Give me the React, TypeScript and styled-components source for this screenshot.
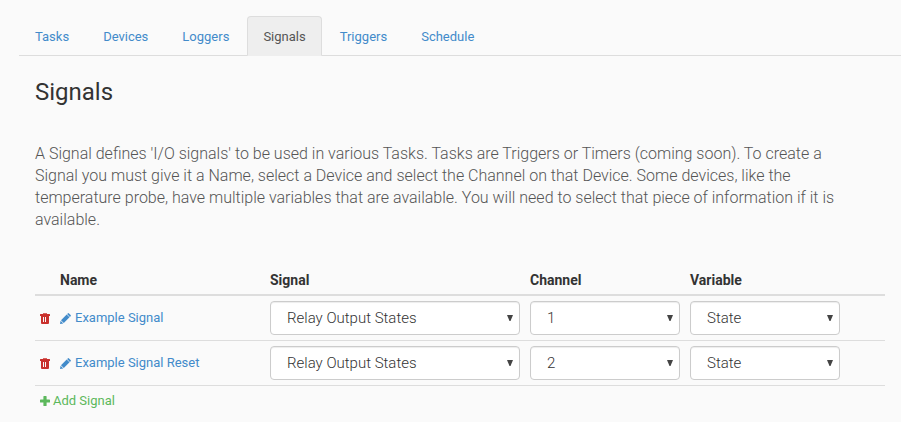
import React from "react";
import styled, { createGlobalStyle } from "styled-components";

const GlobalStyle = createGlobalStyle`
  * { box-sizing: border-box; }
  body {
    margin: 0;
    background: #fafafa;
    color: #333;
    font-family: Roboto, "Liberation Sans", sans-serif;
    font-size: 13px;
    line-height: 18px;
  }
`;

const Page = styled.main`
  padding: 16px 0 0 19px;
`;

const Tabs = styled.nav`
  display: flex;
  border-bottom: 1px solid #ddd;
`;

const Tab = styled.a<{ $active?: boolean }>`
  margin: 0 2px -1px 0;
  padding: 11px 15px 9px;
  border: 1px solid ${(p) => (p.$active ? "#ddd" : "transparent")};
  border-bottom: ${(p) => (p.$active ? "1px solid #eee" : "1px solid transparent")};
  border-radius: 4px 4px 0 0;
  background: ${(p) => (p.$active ? "#eee" : "transparent")};
  color: ${(p) => (p.$active ? "#555" : "#428bca")};
  text-decoration: none;
`;

const Content = styled.section`
  padding: 20px 16px 0;
`;

const Title = styled.h1`
  margin: 0;
  font-size: 24px;
  font-weight: 400;
  line-height: 32px;
`;

const Intro = styled.p`
  max-width: 800px;
  margin: 35px 0 0;
  color: #555;
  font-size: 16px;
  font-weight: 300;
  line-height: 22px;
`;

const Table = styled.table`
  width: 100%;
  margin-top: 35px;
  border-collapse: separate;
  border-spacing: 0;
  table-layout: fixed;
`;

const Col = styled.col<{ $width?: number }>`
  width: ${(p) => (p.$width ? `${p.$width}px` : "auto")};
`;

const HeadCell = styled.th`
  padding: 5px;
  border-bottom: 2px solid #ddd;
  text-align: left;
  font-size: 14px;
  font-weight: 700;
`;

const Cell = styled.td`
  padding: 5px;
  border-bottom: 1px solid #ddd;
`;

const FootCell = styled.td`
  padding: 6px 5px;
`;

const IconButton = styled.button<{ $tone: string }>`
  display: flex;
  align-items: center;
  gap: 3px;
  padding: 0;
  border: 0;
  background: none;
  color: ${(p) => p.$tone};
  font: inherit;
  cursor: pointer;
`;

const NameLink = styled.a`
  display: flex;
  align-items: center;
  gap: 4px;
  color: #428bca;
  text-decoration: none;
`;

const SelectBox = styled.div`
  position: relative;
`;

const Select = styled.select`
  display: block;
  width: 100%;
  height: 34px;
  padding: 0 24px 0 16px;
  appearance: none;
  border: 1px solid #ccc;
  border-radius: 4px;
  background: #fff;
  box-shadow: inset 0 1px 1px rgba(0, 0, 0, 0.075);
  color: #333;
  font: inherit;
  font-size: 15px;
  font-weight: 300;
`;

const Arrow = styled.svg`
  position: absolute;
  top: 14px;
  right: 7px;
  pointer-events: none;
`;

const Icon = styled.svg`
  flex: none;
  fill: currentColor;
`;

const TrashIcon = () => (
  <Icon width="10" height="11" viewBox="0 0 10 11" aria-hidden="true">
    <path
      fillRule="evenodd"
      d="M3 1Q3 0 4 0h2Q7 0 7 1H9.5Q10 1 10 1.500V3H0V1.500Q0 1 .5 1ZM4 .8V1h2V.8ZM1 3h8v7q0 1-1 1H2q-1 0-1-1ZM3 4v5h1V4Zm2 0v5h1V4Z"
    />
  </Icon>
);

const PencilIcon = () => (
  <Icon width="11" height="11" viewBox="0 0 11 11" aria-hidden="true">
    <path d="M7.800.4q.6-.6 1.200 0l1.600 1.600q.6.600 0 1.200l-.7.700L7.100 1.100ZM6.700 1.500l2.800 2.800-5.700 5.700L1 7.200ZM.6 7.700l2.700 2.700L0 11Z" />
  </Icon>
);

const PlusIcon = () => (
  <Icon width="10" height="10" viewBox="0 0 10 10" aria-hidden="true">
    <path d="M4 0h2q.6 0 .6.6v2.800h2.800q.6 0 .6.6v2q0 .6-.6.6H6.600v2.800q0 .6-.6.6H4q-.6 0-.6-.6V6.600H.6Q0 6.600 0 6V4q0-.6.6-.6h2.800V.6Q3.400 0 4 0Z" />
  </Icon>
);

function Dropdown({ label, value, options }: { label: string; value: string; options: string[] }) {
  return (
    <SelectBox>
      <Select aria-label={label} defaultValue={value}>
        {options.map((o) => (
          <option key={o}>{o}</option>
        ))}
      </Select>
      <Arrow width="6" height="6" viewBox="0 0 6 6" aria-hidden="true">
        <path d="M0 0h6L3.500 6h-1Z" fill="#444" />
      </Arrow>
    </SelectBox>
  );
}

const tabs = ["Tasks", "Devices", "Loggers", "Signals", "Triggers", "Schedule"];

const signals = [
  { name: "Example Signal", signal: "Relay Output States", channel: "1", variable: "State" },
  { name: "Example Signal Reset", signal: "Relay Output States", channel: "2", variable: "State" },
];

export default function App() {
  return (
    <Page>
      <GlobalStyle />
      <Tabs>
        {tabs.map((t) => (
          <Tab key={t} href={`#${t.toLowerCase()}`} $active={t === "Signals"}>
            {t}
          </Tab>
        ))}
      </Tabs>
      <Content>
        <Title>Signals</Title>
        <Intro>
          A Signal defines 'I/O signals' to be used in various Tasks. Tasks are Triggers or Timers
          (coming soon). To create a Signal you must give it a Name, select a Device and select the
          Channel on that Device. Some devices, like the temperature probe, have multiple variables
          that are available. You will need to select that piece of information if it is available.
        </Intro>
        <Table>
          <colgroup>
            <Col $width={20} />
            <Col $width={210} />
            <Col $width={260} />
            <Col $width={160} />
            <Col $width={160} />
            <Col />
          </colgroup>
          <thead>
            <tr>
              <HeadCell />
              <HeadCell scope="col">Name</HeadCell>
              <HeadCell scope="col">Signal</HeadCell>
              <HeadCell scope="col">Channel</HeadCell>
              <HeadCell scope="col">Variable</HeadCell>
              <HeadCell />
            </tr>
          </thead>
          <tbody>
            {signals.map((s) => (
              <tr key={s.name}>
                <Cell>
                  <IconButton type="button" $tone="#c9302c" aria-label={`Delete ${s.name}`}>
                    <TrashIcon />
                  </IconButton>
                </Cell>
                <Cell>
                  <NameLink href="#edit">
                    <PencilIcon />
                    {s.name}
                  </NameLink>
                </Cell>
                <Cell>
                  <Dropdown label="Signal" value={s.signal} options={["Relay Output States"]} />
                </Cell>
                <Cell>
                  <Dropdown label="Channel" value={s.channel} options={["1", "2"]} />
                </Cell>
                <Cell>
                  <Dropdown label="Variable" value={s.variable} options={["State"]} />
                </Cell>
                <Cell />
              </tr>
            ))}
          </tbody>
          <tfoot>
            <tr>
              <FootCell colSpan={6}>
                <IconButton type="button" $tone="#5cb85c">
                  <PlusIcon />
                  Add Signal
                </IconButton>
              </FootCell>
            </tr>
          </tfoot>
        </Table>
      </Content>
    </Page>
  );
}
